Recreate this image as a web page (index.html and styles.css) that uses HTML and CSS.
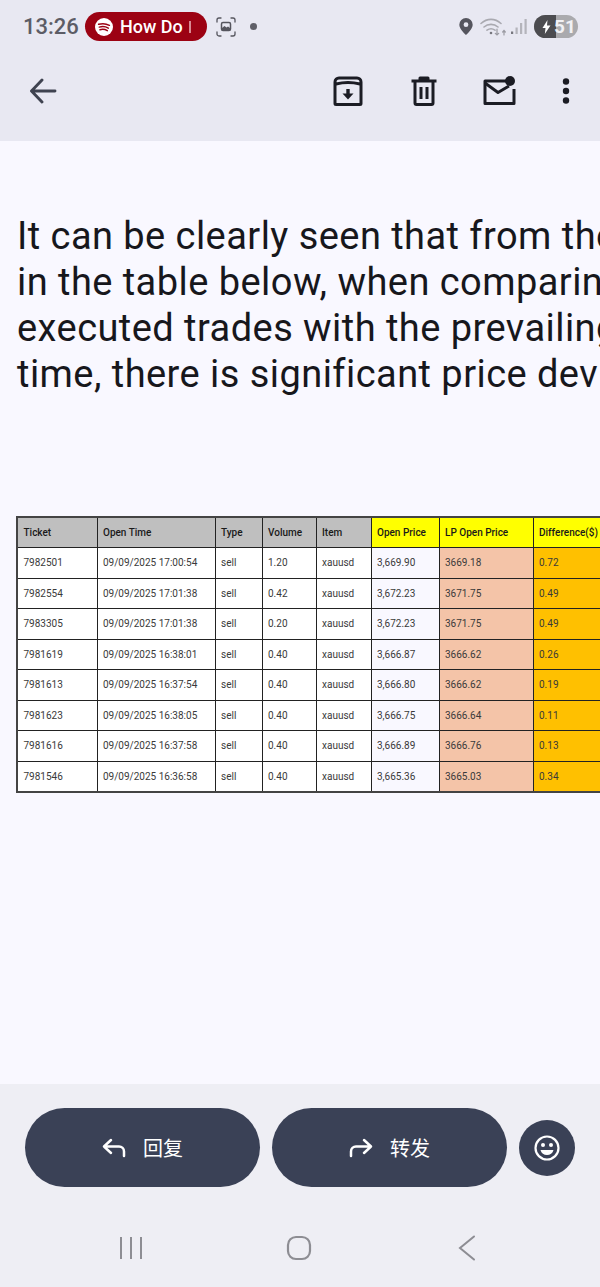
FILE: index.html
```html
<!DOCTYPE html>
<html lang="zh">
<head>
<meta charset="utf-8">
<title>Mail message</title>
<link rel="stylesheet" href="styles.css">
</head>
<body>
<div class="screen">
  <header class="top">
    <div class="status">
      <div class="status-left">
        <span class="time">13:26</span>
        <span class="pill">
          <svg class="spotify" viewBox="0 0 18 18" width="18" height="18"><circle cx="9" cy="9" r="9" fill="#fff"/><path d="M3.6 6.3c3.6-1 7.6-.7 10.8 1M4.3 9.1c3-.8 6.400-.5 9 1M5 11.700c2.500-.6 5-.4 7.300.9" fill="none" stroke="#9c0213" stroke-width="1.500" stroke-linecap="round"/></svg>
          <span class="pill-text">How Do</span><span class="pill-fade"></span>
        </span>
        <svg class="shot" viewBox="0 0 20 20" width="20" height="20" fill="none" stroke="#55555e" stroke-width="1.300" stroke-linecap="round"><path d="M1 5V3a2 2 0 0 1 2-2h2M15 1h2a2 2 0 0 1 2 2v2M19 15v2a2 2 0 0 1-2 2h-2M5 19H3a2 2 0 0 1-2-2v-2"/><rect x="5.500" y="5.500" width="9" height="8" rx="1.500" stroke-width="1.500"/><path d="M6 11l2.500-2 2 1.500 1.500-1 2 1.500V13H6z" fill="#55555e" stroke="none"/></svg>
        <span class="dot"></span>
      </div>
      <div class="status-right">
        <svg class="pin" viewBox="0 0 14 17" width="14" height="17"><path fill-rule="evenodd" d="M7 0a6.700 6.700 0 0 1 6.700 6.700C13.700 11 7 17 7 17S.3 11 .3 6.700A6.700 6.700 0 0 1 7 0zm0 4.300a2.400 2.400 0 1 0 0 4.800 2.400 2.400 0 0 0 0-4.800z" fill="#55555e"/></svg>
        <svg class="wifi" viewBox="0 0 26 20" width="26" height="20" fill="none" stroke="#a9a9b0" stroke-width="1.600" stroke-linecap="round"><path d="M1 6.500c6-5.500 14-5.500 20 0M4 10c4-3.500 10-3.500 14 0M7 13.200c2.500-1.800 5.500-1.800 8 0"/><circle cx="11" cy="16" r="1.300" fill="#77777f" stroke="none"/><path d="M17 12v6M15.300 16.300l1.700 1.700 1.700-1.700M24 13.500V18M22.700 15l1.300-1.500 1.300 1.500" stroke="#9a9aa2" stroke-width="1.200"/></svg>
        <svg class="bars" viewBox="0 0 16 17" width="16" height="17" fill="#b4b4bb"><rect x="0" y="13.500" width="2.200" height="2.500" fill="#77777f"/><rect x="4.500" y="9.500" width="2.200" height="6.500"/><rect x="9" y="5" width="2.200" height="11"/><rect x="13.500" y="1" width="2.200" height="15"/></svg>
        <span class="battery"><span class="bat-fill"></span><svg class="bolt" viewBox="0 0 9 14" width="9" height="14"><path d="M5.500 0L.5 8h3L2.800 14 8.500 5.500H5z" fill="#fff"/></svg><span class="bat-num">51</span></span>
      </div>
    </div>
    <div class="toolbar">
      <svg class="back" viewBox="0 0 28 26" width="28" height="26" fill="none" stroke="#3f4350" stroke-width="2.900" stroke-linecap="round" stroke-linejoin="round"><path d="M26 13H3M13 2L2.500 13 13 24"/></svg>
      <div class="actions">
        <svg class="act-archive" viewBox="0 0 30 30" width="30" height="30" fill="none" stroke="#1b1c24" stroke-width="3" stroke-linejoin="round"><path d="M6 2h18a4 4 0 0 1 4 4v21.500a1 1 0 0 1-1 1H3a1 1 0 0 1-1-1V6a4 4 0 0 1 4-4zM3 8c8-2 16-2 24 0"/><path d="M15 13v7" stroke-width="3.400"/><path d="M9.500 17.500h11L15 23.500z" fill="#1b1c24" stroke="none"/></svg>
        <svg class="act-trash" viewBox="0 0 26 30" width="26" height="30" fill="none" stroke="#1b1c24" stroke-width="3" stroke-linejoin="round"><path d="M.5 5h25M9 5V2h8v3M4 5v22a1.500 1.500 0 0 0 1.500 1.500h15A1.500 1.500 0 0 0 22 27V5M10 11v12M16 11v12"/></svg>
        <svg class="act-mail" viewBox="0 0 33 30" width="33" height="30" fill="none" stroke="#1b1c24" stroke-width="3" stroke-linejoin="round"><path d="M24 5H2v22.500h29V13"/><path d="M2 7l13 9.500L26 10"/><circle cx="27" cy="5" r="5" fill="#1b1c24" stroke="none"/></svg>
        <svg class="act-more" viewBox="0 0 8 26" width="8" height="26" fill="#1b1c24"><circle cx="4" cy="3.500" r="3.200"/><circle cx="4" cy="13" r="3.200"/><circle cx="4" cy="22.500" r="3.200"/></svg>
      </div>
    </div>
  </header>

  <main class="body">
    <p class="lead">It can be clearly seen that from the<br>in the table below, when comparing<br>executed trades with the prevailing<br>time, there is significant price deviation</p>
    <table class="trades">
      <colgroup>
        <col class="c1"><col class="c2"><col class="c3"><col class="c4"><col class="c5"><col class="c6"><col class="c7"><col class="c8">
      </colgroup>
      <thead>
        <tr><th>Ticket</th><th>Open Time</th><th>Type</th><th>Volume</th><th>Item</th><th class="hl">Open Price</th><th class="hl">LP Open Price</th><th class="hl">Difference($)</th></tr>
      </thead>
      <tbody>
        <tr><td>7982501</td><td>09/09/2025 17:00:54</td><td>sell</td><td>1.20</td><td>xauusd</td><td class="plain">3,669.90</td><td class="lp">3669.18</td><td class="diff">0.72</td></tr>
        <tr><td>7982554</td><td>09/09/2025 17:01:38</td><td>sell</td><td>0.42</td><td>xauusd</td><td class="plain">3,672.23</td><td class="lp">3671.75</td><td class="diff">0.49</td></tr>
        <tr><td>7983305</td><td>09/09/2025 17:01:38</td><td>sell</td><td>0.20</td><td>xauusd</td><td class="plain">3,672.23</td><td class="lp">3671.75</td><td class="diff">0.49</td></tr>
        <tr><td>7981619</td><td>09/09/2025 16:38:01</td><td>sell</td><td>0.40</td><td>xauusd</td><td class="plain">3,666.87</td><td class="lp">3666.62</td><td class="diff">0.26</td></tr>
        <tr><td>7981613</td><td>09/09/2025 16:37:54</td><td>sell</td><td>0.40</td><td>xauusd</td><td class="plain">3,666.80</td><td class="lp">3666.62</td><td class="diff">0.19</td></tr>
        <tr><td>7981623</td><td>09/09/2025 16:38:05</td><td>sell</td><td>0.40</td><td>xauusd</td><td class="plain">3,666.75</td><td class="lp">3666.64</td><td class="diff">0.11</td></tr>
        <tr><td>7981616</td><td>09/09/2025 16:37:58</td><td>sell</td><td>0.40</td><td>xauusd</td><td class="plain">3,666.89</td><td class="lp">3666.76</td><td class="diff">0.13</td></tr>
        <tr><td>7981546</td><td>09/09/2025 16:36:58</td><td>sell</td><td>0.40</td><td>xauusd</td><td class="plain">3,665.36</td><td class="lp">3665.03</td><td class="diff">0.34</td></tr>
      </tbody>
    </table>
  </main>

  <footer class="bottom">
    <div class="replybar">
      <button class="action-btn">
        <svg viewBox="0 0 24 20" width="24" height="20" fill="none" stroke="#fff" stroke-width="2.500" stroke-linecap="round" stroke-linejoin="round"><path d="M9 2L2 8.500 9 15M2 8.500h15a5 5 0 0 1 5 5V18"/></svg>
        <span>回复</span>
      </button>
      <button class="action-btn">
        <svg viewBox="0 0 24 20" width="24" height="20" fill="none" stroke="#fff" stroke-width="2.500" stroke-linecap="round" stroke-linejoin="round"><path d="M15 2l7 6.500L15 15M22 8.500H7a5 5 0 0 0-5 5V18"/></svg>
        <span>转发</span>
      </button>
      <button class="emoji-btn" aria-label="emoji">
        <svg viewBox="0 0 26 26" width="26" height="26"><circle cx="13" cy="13" r="11.500" fill="none" stroke="#fff" stroke-width="2.200"/><circle cx="9" cy="10" r="2" fill="#fff"/><circle cx="17" cy="10" r="2" fill="#fff"/><path d="M6.500 15h13c-.8 3.200-3.400 5-6.500 5s-5.700-1.800-6.500-5z" fill="#fff"/></svg>
      </button>
    </div>
    <nav class="navbar">
      <svg viewBox="0 0 24 24" width="24" height="24" fill="none" stroke="#8d8d93" stroke-width="2"><path d="M2 1v22M12 1v22M22 1v22"/></svg>
      <svg viewBox="0 0 26 26" width="26" height="26" fill="none" stroke="#8d8d93" stroke-width="2.200"><rect x="2" y="2" width="22" height="22" rx="8"/></svg>
      <svg class="nav-back" viewBox="0 0 18 26" width="18" height="26" fill="none" stroke="#8d8d93" stroke-width="2" stroke-linecap="round"><path d="M16 1.500L2 13l14 11.500"/></svg>
    </nav>
  </footer>
</div>
</body>
</html>
```
FILE: styles.css
```css
* { box-sizing: border-box; }
html, body { margin: 0; padding: 0; }
body { font-family: Roboto, "Noto Sans CJK SC", sans-serif; }

.screen {
  width: 600px;
  height: 1287px;
  display: flex;
  flex-direction: column;
  overflow: hidden;
  background: #f9f8ff;
}

/* top */
.top {
  height: 141px;
  background: #e8e8f2;
  flex: none;
}
.status {
  height: 53px;
  padding: 0 22px 0 23px;
  display: flex;
  align-items: center;
  justify-content: space-between;
}
.status-left, .status-right { display: flex; align-items: center; }
.time {
  font-size: 22px;
  font-weight: 500;
  color: #5c5c66;
  width: 62px;
}
.pill {
  width: 122px;
  height: 29px;
  border-radius: 15px;
  background: #9c0213;
  display: flex;
  align-items: center;
  padding-left: 10px;
  color: #fff;
  font-size: 18px;
  font-weight: 500;
}
.spotify { flex: none; }
.pill-text { margin-left: 7px; }
.pill-fade {
  width: 2px;
  height: 12px;
  margin-left: 6px;
  background: #d98a92;
}
.shot { margin-left: 9px; }
.dot {
  width: 7px;
  height: 7px;
  border-radius: 50%;
  background: #5f5f68;
  margin-left: 14px;
}
.wifi { margin-left: 7px; }
.bars { margin-left: 5px; }
.battery {
  position: relative;
  width: 44px;
  height: 23px;
  margin-left: 7px;
  border-radius: 12px;
  background: #aaaaae;
  overflow: hidden;
  display: flex;
  align-items: center;
  padding-left: 8px;
}
.bat-fill {
  position: absolute;
  left: 0;
  top: 0;
  bottom: 0;
  width: 22px;
  background: #4c4c50;
}
.bolt { position: relative; }
.bat-num {
  position: relative;
  margin-left: 3px;
  color: #f1f1f4;
  font-size: 19px;
  font-weight: 700;
}
.toolbar {
  height: 76px;
  padding: 0 30px 0 29px;
  display: flex;
  align-items: center;
  justify-content: space-between;
}
.actions { display: flex; align-items: center; }
.act-trash { margin-left: 48px; }
.act-mail { margin-left: 46px; }
.act-more { margin-left: 46px; }

/* message */
.body {
  flex: 1;
  min-height: 0;
  overflow: hidden;
  padding: 72px 0 0 16px;
}
.lead {
  margin: 0 0 119px 1px;
  font-size: 38px;
  line-height: 46px;
  letter-spacing: 0.45px;
  color: #17171c;
  white-space: nowrap;
}
.trades {
  border-collapse: collapse;
  table-layout: fixed;
  width: 606px;
  font-size: 10px;
  color: #3a3a3a;
  border: 2px solid #444;
}
.c1 { width: 80px; }
.c2 { width: 118px; }
.c3 { width: 47px; }
.c4 { width: 54px; }
.c5 { width: 55px; }
.c6 { width: 68px; }
.c7 { width: 94px; }
.c8 { width: 90px; }
.trades th, .trades td {
  border: 1px solid #222;
  height: 30.500px;
  padding: 0 0 0 5.500px;
  text-align: left;
  white-space: nowrap;
}
.trades th {
  background: #bfbfbf;
  color: #1a1a1a;
  font-weight: 500;
}
.trades th.hl { background: #ffff00; }
.trades td { background: #fff; }
.trades td.plain { background: transparent; }
.trades td.lp { background: #f4c4a8; }
.trades td.diff { background: #ffc000; }

/* bottom */
.bottom {
  flex: none;
  height: 203px;
  background: #eeeef4;
}
.replybar {
  padding: 24px 25px 0;
  display: flex;
  align-items: center;
  gap: 12px;
}
.action-btn {
  width: 235px;
  height: 79px;
  border: 0;
  border-radius: 40px;
  background: #3a4156;
  color: #fff;
  display: flex;
  align-items: center;
  justify-content: center;
  gap: 17px;
  font-family: "Noto Sans CJK SC", sans-serif;
  font-size: 20px;
}
.emoji-btn {
  flex: none;
  width: 56px;
  height: 56px;
  border: 0;
  padding: 0;
  border-radius: 50%;
  background: #3a4156;
  display: flex;
  align-items: center;
  justify-content: center;
}
.navbar {
  margin-top: 48px;
  padding: 0 0 0 119px;
  display: flex;
  align-items: center;
  gap: 143px;
}
.nav-back { margin-left: 3px; }
```
